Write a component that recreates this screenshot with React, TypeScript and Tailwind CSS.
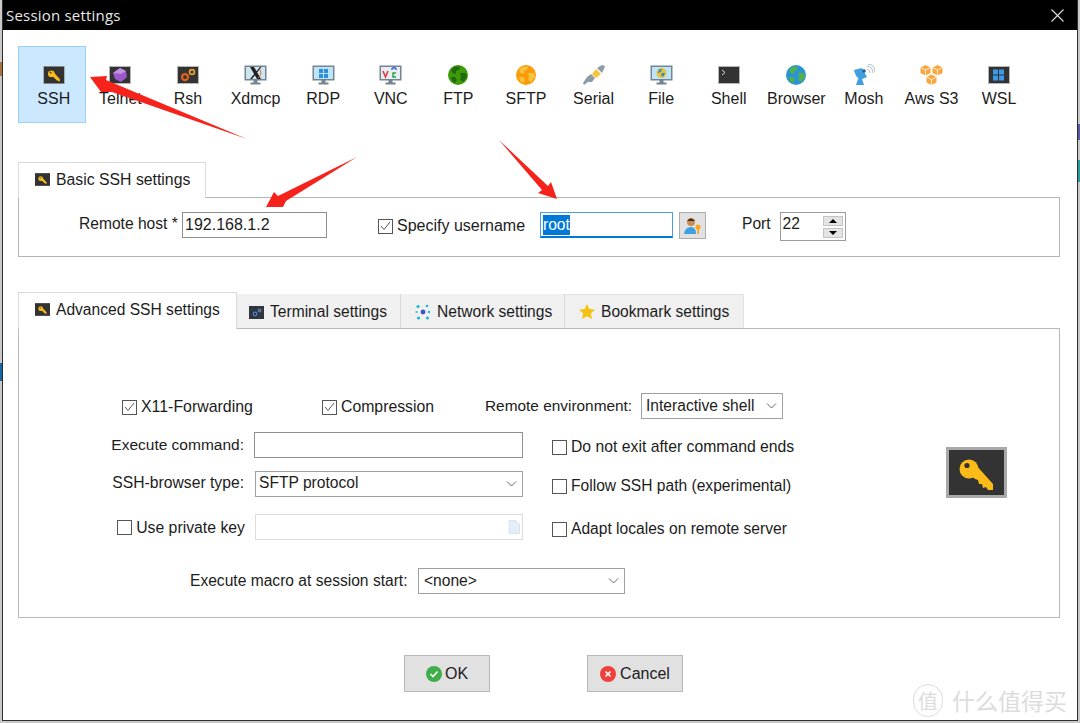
import React from "react";

const KeyGlyph = () => (
  <g>
    <polygon points="29,17 47,37 47,43 42,43 40,40 37,41 36,37 33,37 32,33 29,32 20,24" fill="#fbbc1a" />
    <circle cx="23" cy="22" r="9.5" fill="#fbbc1a" />
    <circle cx="21" cy="18.5" r="2.6" fill="#333" />
  </g>
);

const KeyBox = ({ w, h, border = 3 }: { w: number; h: number; border?: number }) => (
  <svg width={w} height={h} viewBox="0 0 61 51" className="shrink-0">
    <rect x="0" y="0" width="61" height="51" fill="#a9a9a9" />
    <rect x={border} y={border} width={61 - 2 * border} height={51 - 2 * border} fill="#333" />
    <KeyGlyph />
  </svg>
);

const DarkBox = ({ children }: { children: React.ReactNode }) => (
  <svg width="22" height="18" viewBox="0 0 22 18">
    <rect x="0" y="0" width="22" height="18" fill="#b5b5b5" />
    <rect x="1" y="1" width="20" height="16" fill="#333" />
    {children}
  </svg>
);

const Monitor = ({ children, screen = "#bfe3f7" }: { children?: React.ReactNode; screen?: string }) => (
  <svg width="23" height="20" viewBox="0 0 23 20">
    <rect x="0.5" y="0.5" width="22" height="15" fill="#75858f" />
    <rect x="2" y="2" width="19" height="12" fill={screen} />
    <rect x="9.5" y="15" width="4" height="3" fill="#75858f" />
    <rect x="6.5" y="17.5" width="10" height="2" fill="#75858f" />
    {children}
  </svg>
);

const Globe = ({ sea, land }: { sea: string; land: string }) => (
  <svg width="20" height="20" viewBox="0 0 20 20">
    <circle cx="10" cy="10" r="10" fill={sea} />
    <path d="M6 2 L12 1.5 L11 5 L8 6 L8 9 L4.5 8 L3 5 Z M12 8 L18 8 L19 12 L15 17 L12 15 L13 12 Z M3 12 L7 12 L9 15 L7 18 L4 16 Z" fill={land} />
  </svg>
);

const WinLogo = ({ color, x, y, s }: { color: string; x: number; y: number; s: number }) => (
  <g fill={color}>
    <rect x={x} y={y} width={s} height={s} />
    <rect x={x + s + 1} y={y} width={s} height={s} />
    <rect x={x} y={y + s + 1} width={s} height={s} />
    <rect x={x + s + 1} y={y + s + 1} width={s} height={s} />
  </g>
);

const Gear = ({ x, y, r, color }: { x: number; y: number; r: number; color: string }) => (
  <circle cx={x} cy={y} r={r} fill="none" stroke={color} strokeWidth={r * 0.75} />
);

const tools: { label: string; icon: React.ReactNode; selected?: boolean }[] = [
  { label: "SSH", selected: true, icon: <KeyBox w={22} h={18} border={2} /> },
  {
    label: "Telnet",
    icon: (
      <DarkBox>
        <polygon points="11,2 17,5 18,11 12,16 6,13 4,7" fill="#9b59c9" />
        <polygon points="11,2 17,5 12,8 4,7" fill="#c390e2" />
      </DarkBox>
    ),
  },
  {
    label: "Rsh",
    icon: (
      <DarkBox>
        <Gear x={8} y={11} r={3} color="#e2611d" />
        <Gear x={15} y={6} r={2.4} color="#e9a02c" />
      </DarkBox>
    ),
  },
  {
    label: "Xdmcp",
    icon: (
      <Monitor screen="#cfe4ee">
        <path d="M6 2 L10 2 L17 14 L13 14 Z M16 2 L17.5 2 L8 14 L6 14 Z" fill="#222" />
        <path d="M16 5 A6 6 0 0 1 14 13" fill="none" stroke="#d9713c" strokeWidth="1" />
      </Monitor>
    ),
  },
  {
    label: "RDP",
    icon: (
      <Monitor>
        <WinLogo color="#2a8fe0" x={7} y={4} s={4} />
      </Monitor>
    ),
  },
  {
    label: "VNC",
    icon: (
      <Monitor screen="#e6eef3">
        <path d="M4 6 L6.5 12 L9 6" fill="none" stroke="#e23b3b" strokeWidth="1.6" />
        <path d="M13 5 V3.5 Q15 2 17 3.5 V5" fill="none" stroke="#3a57d8" strokeWidth="1.3" />
        <path d="M17 8 H14 V12 H17" fill="none" stroke="#2aa34a" strokeWidth="1.5" />
      </Monitor>
    ),
  },
  { label: "FTP", icon: <Globe sea="#3f9a0a" land="#1f6a10" /> },
  { label: "SFTP", icon: <Globe sea="#fd9a0a" land="#f6c43a" /> },
  {
    label: "Serial",
    icon: (
      <svg width="22" height="20" viewBox="0 0 22 20">
        <polygon points="13,4 18,9 13,13 9,9" fill="#f5c63b" />
        <polygon points="14,3 19,0 22,1 21,4 19,8" fill="#8e9ca5" />
        <polygon points="4,12 8,9 12,13 9,17 5,17 1,20 0,18" fill="#8e9ca5" />
      </svg>
    ),
  },
  {
    label: "File",
    icon: (
      <Monitor>
        <circle cx="11.5" cy="8" r="5" fill="#e2c33a" />
        <path d="M9 4.5 L12 4 L11 7 L8 8 Z M12 8 L15 8 L13 12 L11 10 Z" fill="#3a86c8" />
      </Monitor>
    ),
  },
  {
    label: "Shell",
    icon: (
      <DarkBox>
        <path d="M4 4 L7 6.5 L4 9" fill="none" stroke="#ddd" strokeWidth="1" />
      </DarkBox>
    ),
  },
  { label: "Browser", icon: <Globe sea="#2b94d6" land="#53b247" /> },
  {
    label: "Mosh",
    icon: (
      <svg width="22" height="22" viewBox="0 0 22 22">
        <path d="M1 6 L9 4 L14 13 L7 16 Q2 12 1 6 Z" fill="#3f9fe0" />
        <path d="M5 15 L3 21 L11 21 L9 15 Z" fill="#3f9fe0" />
        <circle cx="11" cy="7" r="1.8" fill="#2a5d8f" />
        <path d="M14 5 Q17 6 17 9 M14 2 Q20 3 20 9 M15 0 Q22 1 22 8" fill="none" stroke="#9fb4c2" strokeWidth="0.9" />
      </svg>
    ),
  },
  {
    label: "Aws S3",
    icon: (
      <svg width="23" height="20" viewBox="0 0 23 20">
        <g fill="#f9a63c">
          <polygon points="5.5,0 10.5,2.5 10.5,8 5.5,10.5 0.5,8 0.5,2.5" />
          <polygon points="17.5,0 22.5,2.5 22.5,8 17.5,10.5 12.5,8 12.5,2.5" />
          <polygon points="11.5,9.5 16.5,12 16.5,17.5 11.5,20 6.5,17.5 6.5,12" />
        </g>
        <g fill="none" stroke="#fff" strokeWidth="0.8">
          <path d="M0.5 2.5 L5.5 5 L10.5 2.5 M5.5 5 V10.5" />
          <path d="M12.5 2.5 L17.5 5 L22.5 2.5 M17.5 5 V10.5" />
          <path d="M6.5 12 L11.5 14.5 L16.5 12 M11.5 14.5 V20" />
        </g>
      </svg>
    ),
  },
  {
    label: "WSL",
    icon: (
      <DarkBox>
        <WinLogo color="#3c9be8" x={5} y={3.5} s={5} />
      </DarkBox>
    ),
  },
];

const Tick = () => (
  <svg width="11" height="10" viewBox="0 0 11 10">
    <path d="M1 5 L4 8.5 L10 1" fill="none" stroke="#555" strokeWidth="1" />
  </svg>
);

const Check = ({ checked }: { checked?: boolean }) => (
  <span className="flex h-[15px] w-[15px] shrink-0 items-center justify-center border border-[#555] bg-white">
    {checked ? <Tick /> : null}
  </span>
);

const Chevron = () => (
  <svg width="11" height="6" viewBox="0 0 11 6" className="shrink-0">
    <path d="M1 0.5 L5.5 5 L10 0.5" fill="none" stroke="#666" strokeWidth="1" />
  </svg>
);

const Select = ({ value, cls, textCls = "" }: { value: string; cls: string; textCls?: string }) => (
  <div className={`flex h-[26px] items-center justify-between border border-[#a0a0a0] bg-white pr-[5px] ${cls}`}>
    <span className={textCls}>{value}</span>
    <Chevron />
  </div>
);

const SmallKey = () => <KeyBox w={15} h={13} border={0} />;

const Arrows = () => (
  <svg width="1080" height="723" viewBox="0 0 1080 723" className="pointer-events-none absolute left-0 top-0">
    <g fill="#f6231c">
      <polygon points="90,77 107,76 106,80 247,139 112,92 101,92" />
      <polygon points="266,207 274,192 278,196 357,157 286,201 283,207" />
      <polygon points="499,140 548,186 551,182 557,199 538,193 542,190" />
    </g>
  </svg>
);

const Watermark = () => (
  <div className="pointer-events-none absolute bottom-[6px] left-[913px] flex items-center gap-[9px] text-[#dcdcdc] [font-family:'Noto_Sans_CJK_SC',sans-serif]">
    <span className="flex h-[33px] w-[30px] items-center justify-center rounded-full border border-[#dcdcdc] text-[20px] leading-none">值</span>
    <span className="whitespace-nowrap text-[23px] leading-none">什么值得买</span>
  </div>
);

export default function App() {
  return (
    <div className="relative flex h-[723px] w-[1080px] overflow-hidden bg-[#c9c9c9] pl-[2px] text-[15.6px] leading-[20px] text-[#1c1c1c] [font-family:'Liberation_Sans',Arial,sans-serif]">
      <span className="absolute left-0 top-[62px] h-[14px] w-[2px] bg-[#a5743d]" />
      <span className="absolute left-0 top-[363px] h-[18px] w-[2px] bg-[#1468a8]" />
      <span className="absolute right-0 top-[124px] h-[16px] w-[2px] bg-[#5a5aa0]" />
      <span className="absolute right-0 top-[160px] h-[22px] w-[2px] bg-[#2d9aa0]" />

      <div className="flex h-[721px] w-[1076px] flex-col border-x border-b border-[#2e2e2e] bg-white">
        <header className="flex h-[30px] shrink-0 items-center justify-between bg-black pl-[3px] pr-[13px] text-[#e8e8e8]">
          <span className="text-[15px] tracking-[0.2px] [font-family:'Open_Sans',sans-serif]">Session settings</span>
          <svg width="13" height="13" viewBox="0 0 13 13">
            <path d="M0.5 0.5 L12.5 12.5 M12.5 0.5 L0.5 12.5" stroke="#ddd" strokeWidth="1.1" />
          </svg>
        </header>

        <nav className="ml-[15px] mt-[16px] flex h-[77px] shrink-0 text-[16px]">
          {tools.map((t) => (
            <div
              key={t.label}
              className={`flex h-[77px] w-[67.6px] shrink-0 flex-col items-center border pt-[17px] ${
                t.selected ? "border-[#99d1ff] bg-[#cce8ff] pl-[4px]" : "border-transparent pl-[2px]"
              }`}
            >
              <div className="flex h-[22px] items-center justify-center">{t.icon}</div>
              <span className="mt-[3px] whitespace-nowrap">{t.label}</span>
            </div>
          ))}
        </nav>

        {/* Basic settings */}
        <div className="ml-[15px] mt-[39px] flex h-[35px] w-[1042px] shrink-0 items-end">
          <div className="-mb-px z-10 flex h-[36px] w-[188px] items-center gap-[6px] border border-b-0 border-[#d9d9d9] bg-white pb-[2px] pl-[16px] text-[15.8px]">
            <SmallKey />
            <span>Basic SSH settings</span>
          </div>
        </div>
        <section className="ml-[15px] flex h-[60px] w-[1042px] shrink-0 items-start border border-[#b4b4b4] pl-[60px] pt-[14px]">
          <span className="mr-[4px] mt-[2px] w-[99px] whitespace-nowrap">Remote host *</span>
          <div className="flex h-[26px] w-[145px] items-center border border-[#8f8f8f] pl-[2px] text-[16px]">192.168.1.2</div>
          <div className="ml-[51px] mt-[4px] flex w-[147px] items-center gap-[4px] text-[16px]">
            <Check checked />
            <span className="whitespace-nowrap">Specify username</span>
          </div>
          <div className="ml-[15px] flex h-[26px] w-[133px] items-center border border-[#4a9de0] border-b-2 border-b-[#0078d7] pl-[2px]">
            <span className="bg-[#0078d7] text-white">root</span>
          </div>
          <div className="ml-[6px] flex h-[27px] w-[27px] items-center justify-center border border-[#adadad] bg-[#e1e1e1]">
            <svg width="20" height="20" viewBox="0 0 20 20">
              <circle cx="8" cy="6" r="4" fill="#c98a55" />
              <path d="M4 5 Q8 0 12 5 Z" fill="#3a3026" />
              <path d="M1 18 Q2 11 8 11 Q13 11 13 18 Z" fill="#3f9fe0" />
              <circle cx="15" cy="11" r="2.6" fill="#f5a623" />
              <rect x="14.2" y="12" width="1.8" height="6" fill="#f5a623" />
            </svg>
          </div>
          <span className="ml-[36px] mt-[2px]">Port</span>
          <div className="ml-[9px] flex h-[29px] w-[66px] items-start justify-between border border-[#9c9c9c] pl-[2px] pr-[2px]">
            <span className="mt-[1px]">22</span>
            <div className="mt-[3px] flex w-[20px] flex-col gap-[2px]">
              <div className="flex h-[10px] items-center justify-center border border-[#c4c4c4] bg-[#e4e4e4]">
                <span className="h-0 w-0 border-x-[4px] border-b-[4px] border-x-transparent border-b-black" />
              </div>
              <div className="flex h-[10px] items-center justify-center border border-[#c4c4c4] bg-[#e4e4e4]">
                <span className="h-0 w-0 border-x-[4px] border-t-[4px] border-x-transparent border-t-black" />
              </div>
            </div>
          </div>
        </section>

        {/* Advanced settings */}
        <div className="ml-[15px] mt-[35px] flex h-[36px] w-[1042px] shrink-0 items-end">
          <div className="-mb-px z-10 flex h-[37px] w-[219px] items-center gap-[6px] border border-b-0 border-[#d9d9d9] bg-white pb-[3px] pl-[16px]">
            <SmallKey />
            <span>Advanced SSH settings</span>
          </div>
          <div className="flex h-[34px] w-[164px] items-center gap-[6px] border-r border-[#d9d9d9] bg-[#f0f0f0] pl-[12px] pt-[2px]">
            <svg width="15" height="13" viewBox="0 0 15 13">
              <rect width="15" height="13" fill="#2f3640" />
              <circle cx="6" cy="8" r="1.8" fill="none" stroke="#4a86c8" strokeWidth="1.2" />
              <circle cx="10.5" cy="4.5" r="1.4" fill="none" stroke="#7fb0e0" strokeWidth="1" />
            </svg>
            <span>Terminal settings</span>
          </div>
          <div className="flex h-[34px] w-[164px] items-center gap-[6px] border-r border-[#d9d9d9] bg-[#f0f0f0] pl-[14px] pt-[2px]">
            <svg width="16" height="16" viewBox="0 0 16 16">
              <circle cx="8" cy="8" r="2.4" fill="#3a55c8" />
              <g fill="#1fb6d0">
                <circle cx="3" cy="2.5" r="1.6" />
                <circle cx="12" cy="2" r="1.3" />
                <circle cx="14" cy="8" r="1.2" />
                <circle cx="12.5" cy="14" r="1.6" />
                <circle cx="3.5" cy="14" r="1.6" />
                <circle cx="1.5" cy="8" r="1" />
              </g>
            </svg>
            <span>Network settings</span>
          </div>
          <div className="flex h-[34px] w-[179px] items-center gap-[6px] border-r border-t border-[#e2e2e2] bg-[#f0f0f0] pl-[14px]">
            <svg width="16" height="15" viewBox="0 0 16 15">
              <polygon points="8,0 10.3,5 16,5.7 11.8,9.5 13,15 8,12.2 3,15 4.2,9.5 0,5.7 5.7,5" fill="#f5c211" />
            </svg>
            <span>Bookmark settings</span>
          </div>
        </div>
        <section className="ml-[15px] flex h-[290px] w-[1042px] shrink-0 flex-col border border-[#b9b9b9] pt-[64px]">
          <div className="flex h-[26px] items-center">
            <div className="ml-[103px] mt-[2px] flex w-[200px] items-center gap-[4px] text-[15.9px]">
              <Check checked />
              <span className="whitespace-nowrap">X11-Forwarding</span>
            </div>
            <div className="mt-[2px] flex w-[163px] items-center gap-[4px] text-[15.8px]">
              <Check checked />
              <span className="whitespace-nowrap">Compression</span>
            </div>
            <span className="w-[156px] whitespace-nowrap text-[15.4px]">Remote environment:</span>
            <Select value="Interactive shell" cls="w-[142px] pl-[4px]" />
          </div>

          <div className="mt-[13px] flex">
            <div className="flex w-[504px] flex-col">
              <div className="flex h-[26px] items-center justify-end gap-[10px]">
                <span className="whitespace-nowrap text-[15.5px]">Execute command:</span>
                <div className="h-[26px] w-[269px] border border-[#8f8f8f]" />
              </div>
              <div className="mt-[13px] flex h-[26px] items-center justify-end gap-[11px]">
                <span className="-translate-y-px whitespace-nowrap text-[15.7px]">SSH-browser type:</span>
                <Select value="SFTP protocol" cls="w-[268px] pl-[3px]" textCls="-translate-y-px" />
              </div>
              <div className="mt-[17px] flex h-[26px] items-center justify-end gap-[10px]">
                <div className="flex items-center gap-[4px] text-[15.8px]">
                  <Check />
                  <span className="translate-y-px whitespace-nowrap">Use private key</span>
                </div>
                <div className="flex h-[26px] w-[268px] items-center justify-end border border-[#dcdcdc] pr-[2px]">
                  <svg width="12" height="14" viewBox="0 0 12 14">
                    <path d="M1 0.5 H8 L11.5 4 V13.5 H1 Z" fill="#e4eef8" stroke="#d4e0ec" strokeWidth="0.8" />
                  </svg>
                </div>
              </div>
            </div>
            <div className="ml-[29px] mt-[2px] flex w-[394px] flex-col">
              <div className="flex h-[26px] items-center gap-[4px] text-[15.75px]">
                <Check />
                <span className="whitespace-nowrap">Do not exit after command ends</span>
              </div>
              <div className="mt-[13px] flex h-[26px] items-center gap-[4px]">
                <Check />
                <span className="whitespace-nowrap">Follow SSH path (experimental)</span>
              </div>
              <div className="mt-[17px] flex h-[26px] items-center gap-[4px]">
                <Check />
                <span className="whitespace-nowrap">Adapt locales on remote server</span>
              </div>
            </div>
            <div className="mt-[15px]">
              <KeyBox w={61} h={51} />
            </div>
          </div>

          <div className="ml-[171px] mt-[26px] flex h-[26px] items-center gap-[9px]">
            <span className="w-[219px] whitespace-nowrap">Execute macro at session start:</span>
            <Select value="<none>" cls="w-[207px] pl-[5px]" />
          </div>
        </section>

        <footer className="ml-[401px] mt-[37px] flex shrink-0 gap-[97px] text-[16px]">
          <button className="flex h-[37px] w-[86px] items-center justify-center gap-[3px] border border-[#b9b9b9] bg-[#e1e1e1]">
            <svg width="16" height="16" viewBox="0 0 16 16">
              <circle cx="8" cy="8" r="8" fill="#3fae4a" />
              <path d="M4.5 8 L7 10.5 L11.5 5.5" fill="none" stroke="#fff" strokeWidth="1.6" />
            </svg>
            <span>OK</span>
          </button>
          <button className="flex h-[37px] w-[96px] items-center justify-center gap-[4px] border border-[#b9b9b9] bg-[#e1e1e1]">
            <svg width="16" height="16" viewBox="0 0 16 16">
              <circle cx="8" cy="8" r="8" fill="#f0403c" />
              <path d="M5.5 5.5 L10.5 10.5 M10.5 5.5 L5.5 10.5" stroke="#fff" strokeWidth="1.6" />
            </svg>
            <span>Cancel</span>
          </button>
        </footer>
      </div>

      <Arrows />
      <Watermark />
    </div>
  );
}
